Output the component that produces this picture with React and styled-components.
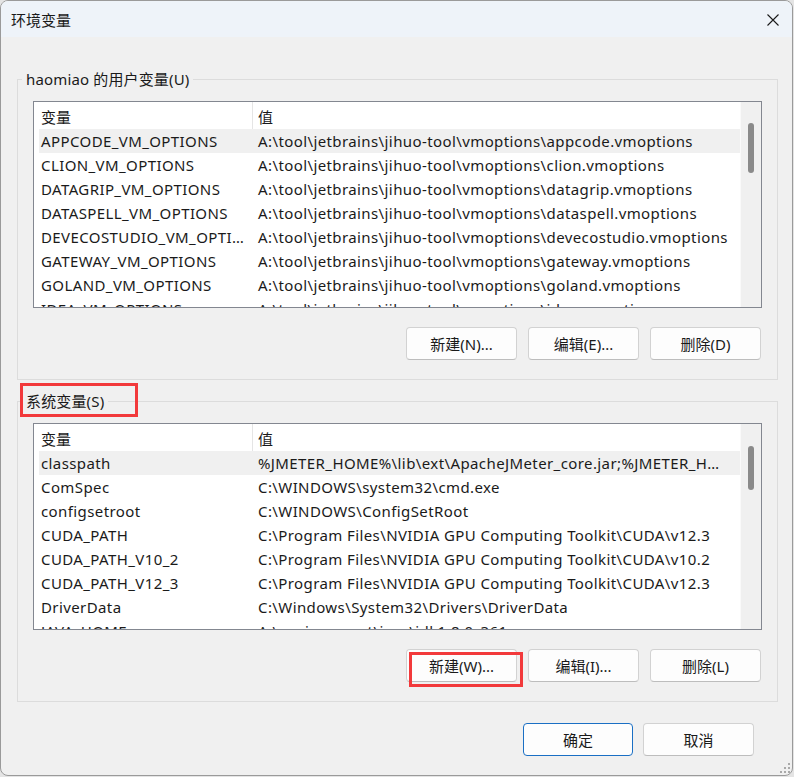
import React from "react";
import styled, { createGlobalStyle } from "styled-components";

const GlobalStyle = createGlobalStyle`
  html, body { margin: 0; padding: 0; background: #e4e4e4; }
  body {
    font-family: "Noto Sans", "Noto Sans CJK SC", sans-serif;
    font-size: 15px;
    color: #1a1a1a;
  }
  * { box-sizing: border-box; }
`;

const Window = styled.div`
  position: relative;
  width: 793px;
  height: 776px;
  border: 1px solid #9a9a9a;
  border-radius: 8px;
  overflow: hidden;
  background: #f0f0f0;
  display: flex;
  flex-direction: column;
`;

const TitleBar = styled.div`
  height: 36px;
  flex: none;
  background: #eef3f9;
  display: flex;
  align-items: center;
  justify-content: space-between;
  padding: 0 13px 0 10px;
`;

const TitleText = styled.div`
  font-size: 15px;
  line-height: 20px;
  padding-top: 1px;
`;

const CloseIcon = styled.svg`
  display: block;
  width: 12px;
  height: 12px;
  margin-top: 1px;
`;

const Content = styled.div`
  flex: 1;
  display: flex;
  flex-direction: column;
  padding: 32px 14px 0 16px;
`;

const Group = styled.fieldset`
  margin: ${(p) => p.$marginTop}px 0 0 0;
  padding: 12px 15px 19px 15px;
  border: 1px solid #dcdcdc;
  min-width: 0;
`;

const Legend = styled.legend`
  position: relative;
  padding: 0 4px;
  margin-left: -11px;
  font-size: 15px;
  line-height: 20px;
  height: 20px;
  letter-spacing: 0.15px;
`;

const Annotation = styled.div`
  position: absolute;
  left: ${(p) => p.$left}px;
  top: ${(p) => p.$top}px;
  width: ${(p) => p.$width}px;
  height: ${(p) => p.$height}px;
  border: 3px solid #f2393b;
  pointer-events: none;
`;

const ListBox = styled.div`
  height: 207px;
  border: 1px solid #838790;
  background: #ffffff;
  display: flex;
`;

const ListMain = styled.div`
  flex: 1;
  min-width: 0;
  display: flex;
  flex-direction: column;
  overflow: hidden;
`;

const HeaderRow = styled.div`
  flex: none;
  height: 27px;
  display: flex;
  align-items: stretch;
`;

const HeaderCell = styled.div`
  display: flex;
  align-items: center;
  padding-top: 2px;
  ${(p) =>
    p.$first
      ? `width: 219px; padding-left: 7px; border-right: 1px solid #e5e5e5;`
      : `flex: 1; padding-left: 5px;`}
`;

const Rows = styled.div`
  flex: 1;
  overflow: hidden;
  padding-left: 5px;
`;

const Row = styled.div`
  height: 24px;
  display: flex;
  align-items: center;
  background: ${(p) => (p.$selected ? "#f0f0f0" : "transparent")};
  white-space: nowrap;
  letter-spacing: 0.4px;
`;

const NameCell = styled.div`
  width: 214px;
  flex: none;
  padding: 0 6px 0 2px;
  overflow: hidden;
  text-overflow: ellipsis;
`;

const ValueCell = styled.div`
  flex: 1;
  min-width: 0;
  padding: 0 12px 0 5px;
  overflow: hidden;
  text-overflow: ellipsis;
`;

const ScrollTrack = styled.div`
  flex: none;
  width: 21px;
  background: #f0f0f0;
  border-left: 1px solid #fafafa;
`;

const ScrollThumb = styled.div`
  width: 6px;
  margin-left: 7px;
  border-radius: 3px;
  background: #8a8a8a;
  margin-top: ${(p) => p.$top}px;
  height: ${(p) => p.$height}px;
`;

const ButtonRow = styled.div`
  display: flex;
  justify-content: flex-end;
  gap: ${(p) => p.$gap || 11}px;
  margin-top: ${(p) => p.$marginTop}px;
  padding-right: ${(p) => p.$padRight || 0}px;
`;

const Button = styled.button`
  position: relative;
  width: ${(p) => p.$width || 111}px;
  height: 33px;
  border-radius: 4px;
  background: #fdfdfd;
  border: 1px solid ${(p) => (p.$default ? "#1a6fc4" : "#d2d2d2")};
  border-bottom-color: ${(p) => (p.$default ? "#1a6fc4" : "#bdbdbd")};
  font-family: "Noto Sans", "Noto Sans CJK SC", sans-serif;
  font-size: 15px;
  color: #1a1a1a;
  padding: 0;
  display: flex;
  align-items: center;
  justify-content: center;
  cursor: default;
`;

const Grip = styled.svg`
  position: absolute;
  right: 1px;
  bottom: 1px;
  width: 12px;
  height: 12px;
`;

const userVars = [
  ["APPCODE_VM_OPTIONS", "A:\\tool\\jetbrains\\jihuo-tool\\vmoptions\\appcode.vmoptions"],
  ["CLION_VM_OPTIONS", "A:\\tool\\jetbrains\\jihuo-tool\\vmoptions\\clion.vmoptions"],
  ["DATAGRIP_VM_OPTIONS", "A:\\tool\\jetbrains\\jihuo-tool\\vmoptions\\datagrip.vmoptions"],
  ["DATASPELL_VM_OPTIONS", "A:\\tool\\jetbrains\\jihuo-tool\\vmoptions\\dataspell.vmoptions"],
  ["DEVECOSTUDIO_VM_OPTIONS", "A:\\tool\\jetbrains\\jihuo-tool\\vmoptions\\devecostudio.vmoptions"],
  ["GATEWAY_VM_OPTIONS", "A:\\tool\\jetbrains\\jihuo-tool\\vmoptions\\gateway.vmoptions"],
  ["GOLAND_VM_OPTIONS", "A:\\tool\\jetbrains\\jihuo-tool\\vmoptions\\goland.vmoptions"],
  ["IDEA_VM_OPTIONS", "A:\\tool\\jetbrains\\jihuo-tool\\vmoptions\\idea.vmoptions"],
];

const systemVars = [
  ["classpath", "%JMETER_HOME%\\lib\\ext\\ApacheJMeter_core.jar;%JMETER_HOME%\\lib\\jorphan.jar;"],
  ["ComSpec", "C:\\WINDOWS\\system32\\cmd.exe"],
  ["configsetroot", "C:\\WINDOWS\\ConfigSetRoot"],
  ["CUDA_PATH", "C:\\Program Files\\NVIDIA GPU Computing Toolkit\\CUDA\\v12.3"],
  ["CUDA_PATH_V10_2", "C:\\Program Files\\NVIDIA GPU Computing Toolkit\\CUDA\\v10.2"],
  ["CUDA_PATH_V12_3", "C:\\Program Files\\NVIDIA GPU Computing Toolkit\\CUDA\\v12.3"],
  ["DriverData", "C:\\Windows\\System32\\Drivers\\DriverData"],
  ["JAVA_HOME", "A:\\environment\\java\\jdk1.8.0_361"],
];

function VarList({ rows, thumbTop, thumbHeight }) {
  return (
    <ListBox>
      <ListMain>
        <HeaderRow>
          <HeaderCell $first>变量</HeaderCell>
          <HeaderCell>值</HeaderCell>
        </HeaderRow>
        <Rows>
          {rows.map(([name, value], i) => (
            <Row key={name} $selected={i === 0}>
              <NameCell>{name}</NameCell>
              <ValueCell>{value}</ValueCell>
            </Row>
          ))}
        </Rows>
      </ListMain>
      <ScrollTrack>
        <ScrollThumb $top={thumbTop} $height={thumbHeight} />
      </ScrollTrack>
    </ListBox>
  );
}

export default function App() {
  return (
    <>
      <GlobalStyle />
      <Window>
        <TitleBar>
          <TitleText>环境变量</TitleText>
          <CloseIcon viewBox="0 0 12 12">
            <path d="M0.5 0.5 L11.5 11.5 M11.5 0.5 L0.5 11.5" stroke="#1a1a1a" strokeWidth="1.1" fill="none" />
          </CloseIcon>
        </TitleBar>
        <Content>
          <Group $marginTop={0}>
            <Legend>haomiao 的用户变量(U)</Legend>
            <VarList rows={userVars} thumbTop={21} thumbHeight={50} />
            <ButtonRow $marginTop={19} $padRight={1}>
              <Button>新建(N)...</Button>
              <Button>编辑(E)...</Button>
              <Button>删除(D)</Button>
            </ButtonRow>
          </Group>
          <Group $marginTop={11}>
            <Legend>
              系统变量(S)
              <Annotation $left={-2} $top={-8} $width={118} $height={34} />
            </Legend>
            <VarList rows={systemVars} thumbTop={22} thumbHeight={44} />
            <ButtonRow $marginTop={19} $padRight={1}>
              <Button>
                新建(W)...
                <Annotation $left={2} $top={2} $width={114} $height={35} />
              </Button>
              <Button>编辑(I)...</Button>
              <Button>删除(L)</Button>
            </ButtonRow>
          </Group>
          <ButtonRow $marginTop={21} $padRight={24} $gap={10}>
            <Button $default $width={110}>确定</Button>
            <Button $width={111}>取消</Button>
          </ButtonRow>
        </Content>
        <Grip viewBox="0 0 12 12">
          <g fill="#a9a9a9">
            <rect x="9" y="1" width="2" height="2" />
            <rect x="5" y="5" width="2" height="2" />
            <rect x="9" y="5" width="2" height="2" />
            <rect x="1" y="9" width="2" height="2" />
            <rect x="5" y="9" width="2" height="2" />
            <rect x="9" y="9" width="2" height="2" />
          </g>
        </Grip>
      </Window>
    </>
  );
}
